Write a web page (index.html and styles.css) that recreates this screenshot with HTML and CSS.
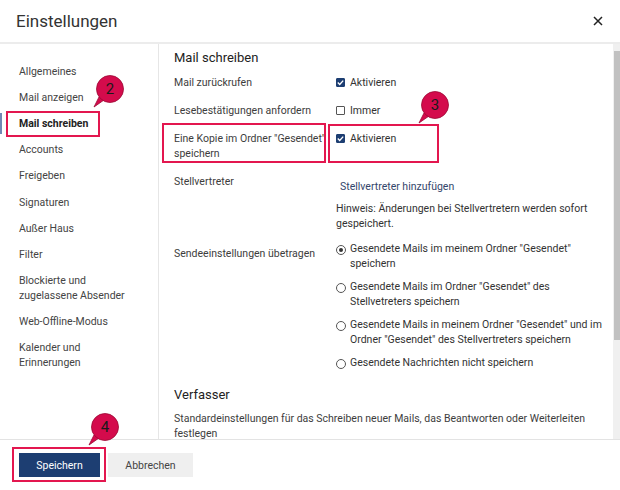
FILE: index.html
```html
<!DOCTYPE html>
<html lang="de">
<head>
<meta charset="UTF-8">
<title>Einstellungen</title>
<link rel="stylesheet" href="styles.css">
</head>
<body>
<div class="dialog">
<div class="head">
<h1>Einstellungen</h1>
<span class="close"><svg viewBox="0 0 10 10" width="10" height="10"><path d="M1 1L9 9M9 1L1 9" stroke="#222" stroke-width="1.5" fill="none"/></svg></span>
</div>

<div class="main">
<div class="nav">
<div class="nav-item">Allgemeines</div>
<div class="nav-item">Mail anzeigen</div>
<div class="nav-item active">Mail schreiben</div>
<div class="nav-item">Accounts</div>
<div class="nav-item">Freigeben</div>
<div class="nav-item">Signaturen</div>
<div class="nav-item">Außer Haus</div>
<div class="nav-item">Filter</div>
<div class="nav-item">Blockierte und<br>zugelassene Absender</div>
<div class="nav-item">Web-Offline-Modus</div>
<div class="nav-item">Kalender und<br>Erinnerungen</div>
</div>

<div class="content">
<h2>Mail schreiben</h2>
<div class="row">
<div class="label">Mail zurückrufen</div>
<div class="ctrl"><span class="check on"></span>Aktivieren</div>
</div>
<div class="row">
<div class="label">Lesebestätigungen anfordern</div>
<div class="ctrl"><span class="check"></span>Immer</div>
</div>
<div class="row">
<div class="label">Eine Kopie im Ordner "Gesendet" speichern</div>
<div class="ctrl"><span class="check on"></span>Aktivieren</div>
</div>
<div class="row deputy">
<div class="label">Stellvertreter</div>
<div class="ctrl block">
<div class="link">Stellvertreter hinzufügen</div>
<div class="hint">Hinweis: Änderungen bei Stellvertretern werden sofort gespeichert.</div>
</div>
</div>
<div class="row">
<div class="label pad">Sendeeinstellungen übetragen</div>
<div class="ctrl block">
<div class="option"><span class="radio on"></span><span>Gesendete Mails im meinem Ordner "Gesendet" speichern</span></div>
<div class="option"><span class="radio"></span><span>Gesendete Mails im Ordner "Gesendet" des Stellvetreters speichern</span></div>
<div class="option"><span class="radio"></span><span>Gesendete Mails in meinem Ordner "Gesendet" und im Ordner "Gesendet" des Stellvertreters speichern</span></div>
<div class="option"><span class="radio"></span><span>Gesendete Nachrichten nicht speichern</span></div>
</div>
</div>

<h2 class="second">Verfasser</h2>
<p class="desc">Standardeinstellungen für das Schreiben neuer Mails, das Beantworten oder Weiterleiten festlegen</p>
</div>

<div class="scroll"><div class="thumb"></div></div>
</div>

<div class="foot">
<span class="btn primary">Speichern</span>
<span class="btn">Abbrechen</span>
</div>

<!-- Markierungen -->
<div class="mark mark-nav"></div>
<div class="mark mark-label"></div>
<div class="mark mark-ctrl"></div>
<div class="mark mark-save"></div>
<div class="badge badge-2"><svg viewBox="0 0 40 40" width="40" height="40"><path d="M13 22L8 32L18 25Z" fill="#d40b4c" stroke="#9a0934" stroke-width="0.8"/><circle cx="24" cy="14" r="13.5" fill="#d40b4c" stroke="#9a0934" stroke-width="0.8"/></svg><span>2</span></div>
<div class="badge badge-3"><svg viewBox="0 0 40 40" width="40" height="40"><path d="M13 22L8 32L18 25Z" fill="#d40b4c" stroke="#9a0934" stroke-width="0.8"/><circle cx="24" cy="14" r="13.5" fill="#d40b4c" stroke="#9a0934" stroke-width="0.8"/></svg><span>3</span></div>
<div class="badge badge-4"><svg viewBox="0 0 40 40" width="40" height="40"><path d="M13 22L8 32L18 25Z" fill="#d40b4c" stroke="#9a0934" stroke-width="0.8"/><circle cx="24" cy="14" r="13.5" fill="#d40b4c" stroke="#9a0934" stroke-width="0.8"/></svg><span>4</span></div>
</div>
</body>
</html>
```

FILE: styles.css
```css
*{margin:0;padding:0;box-sizing:border-box;}
body{font-family:Roboto,"Liberation Sans",sans-serif;font-size:10.5px;color:#3d3d3d;background:#fff;}
.dialog{position:relative;width:620px;height:490px;display:flex;flex-direction:column;overflow:hidden;}

.head{height:44px;border-bottom:2px solid #ececec;display:flex;align-items:center;justify-content:space-between;padding:0 17px 0 16px;}
.head h1{font-size:17px;font-weight:400;color:#333;line-height:20px;}
.close{display:flex;width:10px;height:10px;}

.main{height:395px;display:flex;}
.nav{width:159px;flex:none;border-right:1px solid #e6e6e6;padding-top:15px;}
.nav-item{position:relative;padding:5px 0 6px 19px;line-height:15px;color:#444;}
.nav-item.active{font-weight:700;color:#222;}
.nav-item.active::before{content:"";position:absolute;left:0;top:2px;bottom:3px;width:2px;background:#7089b4;}
.nav-item:nth-child(n+6){top:1px;}

.content{flex:1;padding:5px 8px 0 15px;overflow:hidden;}
.content h2{font-size:13px;font-weight:400;color:#222;line-height:18px;margin-bottom:8px;}
.content h2.second{margin-top:15.5px;margin-bottom:6.5px;}
.row{display:flex;line-height:15px;margin-bottom:13px;}
.row.deputy{margin-bottom:11px;}
.label{width:162px;flex:none;padding-right:6px;}
.label.pad{padding-top:4px;}
.ctrl{flex:1;display:flex;align-items:center;align-self:flex-start;color:#333;}
.ctrl.block{display:block;}
.check{width:9px;height:9px;border:1px solid #555;border-radius:1px;margin-right:5px;flex:none;background:#fff;}
.check.on{border-color:#1d3e72;background:#1d3e72 url("data:image/svg+xml,%3Csvg xmlns='http://www.w3.org/2000/svg' viewBox='0 0 9 9'%3E%3Cpath d='M1.8 4.6L3.7 6.4L7.2 2.6' stroke='white' stroke-width='1.4' fill='none'/%3E%3C/svg%3E") center/9px 9px no-repeat;}
.link{margin-top:5px;padding-left:4px;color:#34466b;}
.hint{margin-top:7px;}
.option{display:flex;line-height:14.5px;margin-bottom:9px;}
.option:last-child{margin-bottom:0;}
.radio{width:10px;height:10px;border:1px solid #555;border-radius:50%;margin:2.5px 4px 0 0;flex:none;position:relative;}
.radio.on::after{content:"";position:absolute;left:2px;top:2px;width:4px;height:4px;border-radius:50%;background:#333;}
.desc{line-height:15px;}

.scroll{width:7px;flex:none;background:#f0f0f0;padding:7px 0 0 1px;}
.thumb{height:289px;background:#c1c1c1;}

.foot{flex:1;border-top:1px solid #e3e3e3;display:flex;gap:8px;padding:13px 0 0 19px;}
.btn{height:24px;display:flex;align-items:center;justify-content:center;background:#efefef;color:#444;width:85px;}
.btn.primary{background:#1d3e72;color:#fff;width:81px;}

.mark{position:absolute;border:2px solid #e3174f;}
.mark-nav{left:6px;top:111px;width:94px;height:26px;}
.mark-label{left:162px;top:123px;width:164px;height:40px;}
.mark-ctrl{left:328px;top:124px;width:111px;height:39px;}
.mark-save{left:12px;top:447px;width:94px;height:35px;}
.badge{position:absolute;width:40px;height:40px;}
.badge svg{display:block;}
.badge span{position:absolute;left:10.5px;top:0;width:27px;height:28px;display:flex;align-items:center;justify-content:center;font-size:15px;color:#1a1a1a;}
.badge-2{left:86px;top:75px;}
.badge-3{left:411px;top:91px;}
.badge-4{left:81px;top:413px;}
```
